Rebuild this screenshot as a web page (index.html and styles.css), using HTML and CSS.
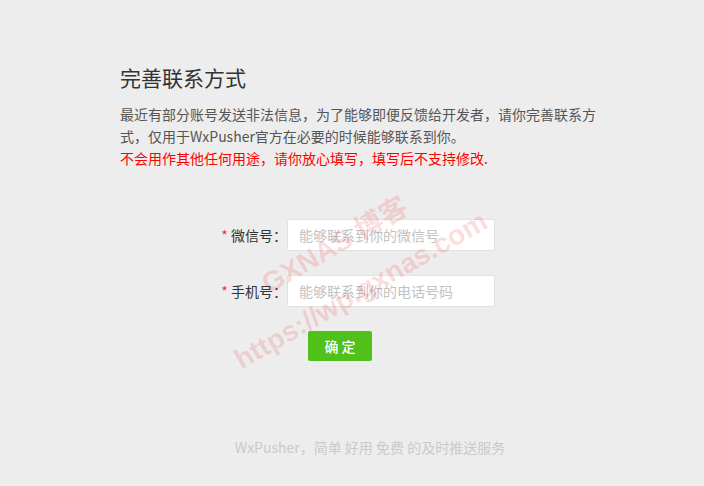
FILE: index.html
```html
<!DOCTYPE html>
<html lang="zh-CN">
<head>
    <meta charset="UTF-8">
    <meta name="viewport" content="width=device-width, initial-scale=1.0">
    <title>完善联系方式</title>
    <link rel="stylesheet" href="styles.css">
</head>
<body>
    <div class="page">
        <h1 class="title">完善联系方式</h1>
        <p class="desc">
            最近有部分账号发送非法信息，为了能够即便反馈给开发者，请你完善联系方式，仅用于WxPusher官方在必要的时候能够联系到你。<br>
            <span class="warn">不会用作其他任何用途，请你放心填写，填写后不支持修改.</span>
        </p>
        <form class="form" onsubmit="return false">
            <div class="row">
                <label class="label" for="wechat"><span class="req">*</span> 微信号：</label>
                <input class="input" id="wechat" type="text" placeholder="能够联系到你的微信号">
            </div>
            <div class="row">
                <label class="label" for="phone"><span class="req">*</span> 手机号：</label>
                <input class="input" id="phone" type="text" placeholder="能够联系到你的电话号码">
            </div>
            <div class="actions">
                <button class="btn" type="submit">确 定</button>
            </div>
        </form>
        <div class="footer">WxPusher，简单 好用 免费 的及时推送服务</div>
    </div>

    <!-- watermark -->
    <div class="watermark">GXNAS 博客<br>https://wp.gxnas.com</div>
</body>
</html>
```

FILE: styles.css
```css
* {
    box-sizing: border-box;
}
body {
    margin: 0;
    background-color: #ededed;
    font-family: "Noto Sans CJK SC", sans-serif;
    color: #333;
}
.page {
    width: 496px;
    margin: 0 auto;
    padding: 63px 0 0 16px;
}
.title {
    margin: 0;
    font-size: 21px;
    font-weight: normal;
    line-height: 28px;
    color: #333;
}
.desc {
    margin: 12px 0 0;
    font-size: 14px;
    line-height: 22px;
    color: #555;
}
.warn {
    color: #f00;
}
.form {
    margin-top: 50px;
}
.row {
    display: flex;
    align-items: center;
    margin-bottom: 24px;
}
.label {
    width: 167px;
    text-align: right;
    font-size: 14px;
    color: #333;
}
.req {
    color: #e33;
}
.input {
    width: 208px;
    height: 32px;
    padding: 0 11px;
    border: 1px solid #e2e2e2;
    border-radius: 2px;
    background-color: #fff;
    font-family: inherit;
    font-size: 14px;
    color: #333;
    outline: none;
}
.input::placeholder {
    color: #c2c2c2;
}
.actions {
    padding-left: 188px;
}
.btn {
    width: 64px;
    height: 30px;
    border: none;
    border-radius: 2px;
    background-color: #50c01b;
    color: #fff;
    font-family: inherit;
    font-size: 14px;
    font-weight: 500;
    cursor: pointer;
}
.footer {
    margin-top: 76px;
    padding-left: 20px;
    text-align: center;
    font-size: 14px;
    line-height: 20px;
    color: #cacaca;
}
.watermark {
    position: absolute;
    left: 348px;
    top: 268px;
    transform: translate(-50%, -50%) rotate(-30deg);
    text-align: center;
    white-space: nowrap;
    font-family: "Liberation Sans", "Noto Sans CJK SC", sans-serif;
    font-size: 28px;
    font-weight: bold;
    line-height: 52px;
    color: rgba(240, 40, 40, 0.16);
    pointer-events: none;
}
```
